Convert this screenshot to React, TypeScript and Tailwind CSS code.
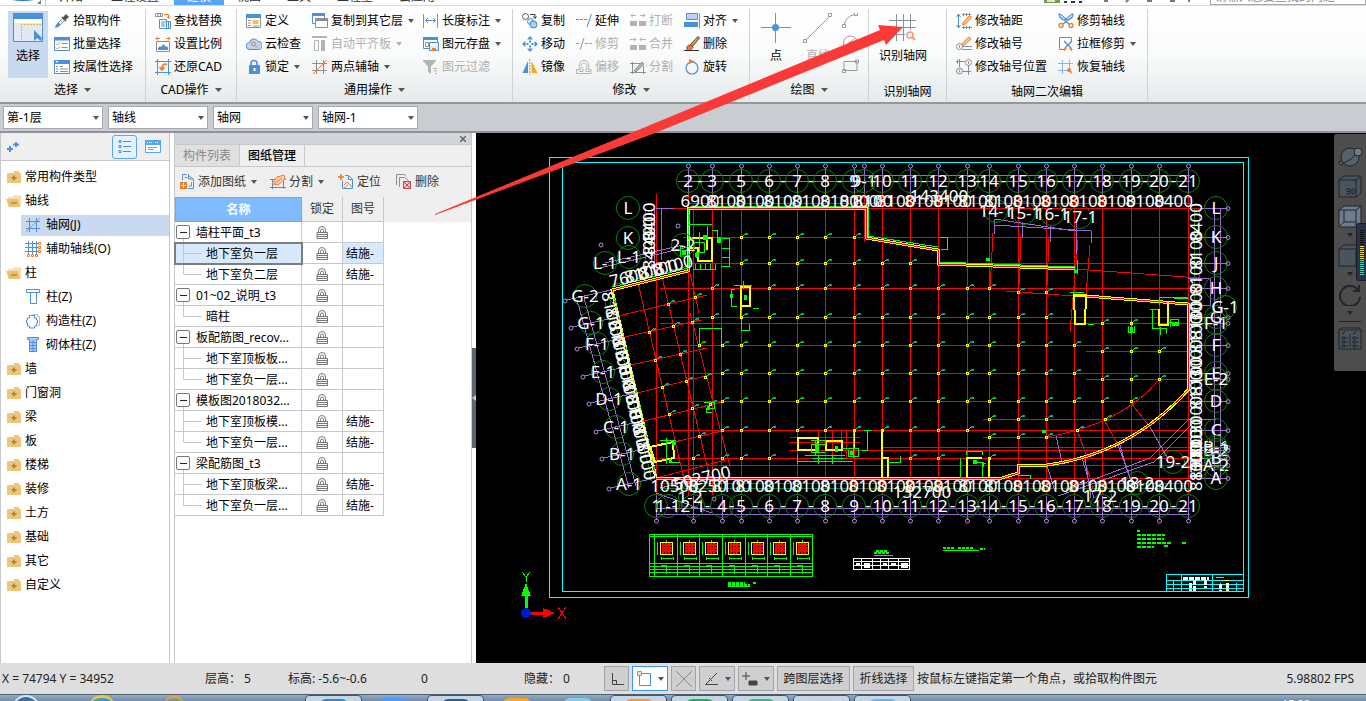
import { useState } from "react";
import type { ReactNode } from "react";

const B = "#4a90dc";
const O = "#f27a2a";
const G = "#87919a";
const D = "#b4b4b4";

// --- Icons, all drawn on a 16x16 box ---
const icons: Record<string, ReactNode> = {
  pipette: (
    <>
      <path d="M1.500 14.500l1-3 6-6 2 2-6 6z" fill="#e8eef4" stroke={G} />
      <path d="M1.500 14.500l1-3 2-2 2 2-2 2z" fill={B} />
      <path d="M8 4l4 4M9.500 5L12 2l2 2-3 2.500z" fill="#555" stroke="#555" strokeWidth="1.500" />
    </>
  ),
  batch: (
    <>
      <path d="M.5 1.500h15v13H.5z" fill="#fff" stroke={B} />
      <path d="M0 1h16v3.500H0z" fill={B} />
      <path d="M2 7.500l1.500 1.500L6 6.500M2 11.500l1.500 1.500L6 10.500" stroke={O} />
      <path d="M7.500 7.500h6M7.500 11.500h6" stroke={G} />
    </>
  ),
  propSelect: (
    <>
      <path d="M.5 1.500h15v13H.5z" fill="#fff" stroke={B} />
      <path d="M0 1h16v4H0z" fill={B} />
      <path d="M2 7.500h2M2 12.500h2M6 7.500h3M6 12.500h8" stroke={G} />
      <path d="M2 10h2M6 10h8" stroke={G} />
      <path d="M1.500 2h3L3 4z" fill="#fff" />
    </>
  ),
  findReplace: (
    <>
      <path d="M.5 .5h7v3h-7zM3 .5v3M5.500 .5v3" stroke={G} />
      <path d="M9 1.500h4.500V5M12 3.500l1.500 2 1.500-2" stroke={O} />
      <path d="M4.500 6.500h7v2h4v7h-11z" fill="#fff" stroke={B} />
      <path d="M6 9h6M6 11h4M6 13h4M11.500 9v6M13.500 9v6" stroke={B} />
    </>
  ),
  scale: (
    <>
      <path d="M1 2.500h4M11 2.500h4M3 .5l-2 2 2 2M13 .5l2 2-2 2" stroke={O} />
      <path d="M1.500 5.500h13v10h-13z" fill="#fff" stroke={G} />
      <path d="M3 14V12l2-2 1 1 2.500-3L11 11l1-1 1 2v2z" fill={B} />
    </>
  ),
  restore: (
    <>
      <path d="M2.500 0v16M13.500 0v16M0 2.500h16M0 13.500h16" stroke={B} />
      <path d="M12 5.500C8 4 7 7 7 10M4.500 8l2.500 3 2.500-3" stroke={O} strokeWidth="1.600" />
    </>
  ),
  define: (
    <>
      <path d="M.5 1.500h14v13H.5z" fill="#fff" stroke={G} />
      <path d="M0 1h15v4H0z" fill={B} />
      <path d="M2 7.500h3M2 10h3M2 12.500h3M7 13h6" stroke={G} />
      <path d="M6.500 7h6v4h-6z" fill="#fbc04a" />
    </>
  ),
  cloud: (
    <>
      <path d="M4 13.500a3.500 3.500 0 01-.5-7 4.500 4.500 0 018.500-1 4 4 0 01.5 8z" fill="#b9d5f3" stroke={B} />
      <circle cx="7.500" cy="8" r="2" stroke={O} />
      <path d="M9 9.500l2 2" stroke={O} />
    </>
  ),
  lock: (
    <>
      <path d="M5 7V4.500a3 3 0 016 0V7" stroke={B} strokeWidth="1.600" />
      <path d="M3.500 6.500h10v8h-10z" fill={B} stroke={B} />
      <path d="M8.500 9v3" stroke="#fff" strokeWidth="2" />
    </>
  ),
  copyLayer: (
    <>
      <path d="M.5 .5h12v10H.5z" fill="#fff" stroke={B} />
      <path d="M0 0h13v3H0z" fill={B} />
      <path d="M3.500 5.500h12v9h-12z" fill="#fff" stroke={G} />
      <path d="M3 5h13v3H3z" fill={G} />
    </>
  ),
  alignSlab: (
    <>
      <path d="M0 1h15" stroke={D} strokeWidth="2" />
      <path d="M2.500 4.500h4v10h-4z" stroke={D} />
      <path d="M9 4h4v11H9z" fill={D} />
    </>
  ),
  twoPoint: (
    <>
      <path d="M4.500 1v14M11.500 1v14M0 4.500h15M0 11.500h15" stroke={G} />
      <path d="M1 15L15 1" stroke={O} />
    </>
  ),
  dim: (
    <>
      <path d="M.5 1v14M14.500 1v14" stroke={G} />
      <path d="M3 7.500h9M5 5L2.500 7.500 5 10M10 5l2.500 2.500L10 10" stroke={B} />
    </>
  ),
  save: (
    <>
      <path d="M.5 1.500h14v11H.5z" fill="#fff" stroke={B} />
      <path d="M0 1h15v3H0z" fill={B} />
      <path d="M2.500 6.500h3v4h-3z" stroke={G} />
      <path d="M6.500 6.500h9v8h-9z" fill="#dceafb" stroke={B} />
      <path d="M8 7h6v3H8z" fill="#fff" />
      <path d="M9 12h4v3H9z" fill={O} />
    </>
  ),
  filter: (
    <>
      <path d="M0 1h13v1L8 7.500V15l-3-2.500v-5L0 2z" fill={D} />
      <path d="M10 9.500h4M11 12h3M12 14.500h2" stroke={D} />
    </>
  ),
  copy: (
    <>
      <circle cx="3.500" cy="3.500" r="3" fill="#fff" stroke="#555" />
      <path d="M8 1.500h5V5M11.500 3.500l1.500 2 1.500-2" stroke="#333" />
      <circle cx="8.500" cy="8.500" r="3" fill="#d4e7fb" stroke={B} />
      <circle cx="11.500" cy="11.500" r="3.500" fill="#a9d2f6" stroke="#3d85b8" />
    </>
  ),
  move: (
    <path d="M8 0l3 3.500H5zM8 16l3-3.500H5zM0 8l3.500-3v6zM16 8l-3.500-3v6zM7 4.500h2v2H7zM7 9.500h2v2H7zM4.500 7h2v2h-2zM9.500 7h2v2h-2z" fill={B} />
  ),
  mirror: (
    <>
      <path d="M6 2v12H.5z" fill={B} />
      <path d="M9.500 2v12h6z" fill="#fba919" />
      <path d="M7.800 0v16" stroke={G} strokeDasharray="2 1" />
    </>
  ),
  extend: (
    <>
      <path d="M0 6.500h11" stroke={B} strokeDasharray="3 1" />
      <path d="M15.500 1L11 14" stroke={B} />
    </>
  ),
  trim: (
    <>
      <path d="M0 7.500h4M9 7.500h7" stroke="#999" strokeDasharray="3 1" />
      <path d="M8 2L4 14" stroke="#999" />
    </>
  ),
  offset: (
    <>
      <path d="M.5 14.500v-4h4c-3-4-1-9 3.500-9s6 5 4 9h3v4z" stroke={D} />
      <path d="M3 12.500h4V10C4 7 5 4 8 4s4 3 2 6v2.500h4" stroke={D} />
    </>
  ),
  break: (
    <>
      <path d="M0 8h7v5H0zM9 8h7v5H9z" fill={D} />
      <path d="M1 2.500h5M10 2.500h5M3 .5L1 2.500l2 2M13 .5l2 2-2 2" stroke={D} />
    </>
  ),
  merge: (
    <>
      <path d="M0 9h7v5H0zM9 9h7v5H9z" fill={D} />
      <path d="M0 3.500h6M10 3.500h6M4 1.500l2 2-2 2M12 1.500l-2 2 2 2" stroke={D} />
    </>
  ),
  split: (
    <>
      <path d="M0 4.500h12M0 13.500h16M2.500 3v12M13.500 7v8" stroke="#8f8f8f" />
      <path d="M4 12l8-9 2 2-8 8z" fill={D} stroke="#8f8f8f" />
    </>
  ),
  align: (
    <>
      <path d="M2.500 .5h11v6h-11z" fill="#b9d3f5" stroke={B} />
      <path d="M0 9h14v5H0z" fill={B} />
      <path d="M15.500 0v15" stroke={G} />
    </>
  ),
  erase: (
    <>
      <path d="M6 9l8-8.500 1.500 1.500-7 8.500z" fill="#cda365" stroke="#53432e" />
      <path d="M3 10.500l4-2 2 3-3 3H3z" fill={O} stroke="#a33a1c" />
      <path d="M0 14.500h15" stroke="#333" />
    </>
  ),
  rotate: (
    <>
      <circle cx="8" cy="9" r="6" stroke={B} strokeWidth="1.200" />
      <path d="M5 0l6 2.500L5 5z" fill={O} />
    </>
  ),
  axisGap: (
    <>
      <path d="M2.500 2v12M.5 4l2-3 2 3M.5 12l2 3 2-3" stroke={B} />
      <path d="M6 1.500h9M6 14.500h10M7.500 0v3M10.500 0v3M13.500 0v3M7.500 13v3M10.500 13v3M13.500 13v3" stroke={G} />
      <path d="M6.500 12l1-3 6-6.500 2 2-6 6.500z" fill="#f8c98d" stroke={O} />
    </>
  ),
  axisNo: (
    <>
      <circle cx="3.500" cy="10.500" r="3" stroke={G} />
      <path d="M3.500 9v3" stroke={O} />
      <path d="M7 10.500h9M6 13.500h10" stroke={G} />
      <path d="M6 9.500l1-3 6-5.500 2 2-6 5.500z" fill="#f8c98d" stroke={O} />
    </>
  ),
  axisPos: (
    <>
      <path d="M3.500 0v8M0 2.500h9M12.500 6v10M7 12.500h8M1.500 .5v4" stroke={G} />
      <circle cx="12.500" cy="3.500" r="3" stroke={G} />
      <circle cx="3.500" cy="12" r="3" stroke={G} />
      <path d="M12.500 2v3M3.500 10.500v3" stroke={O} />
    </>
  ),
  scissors: (
    <>
      <path d="M2 4l9 7M14 4l-9 7M1 1c0 3 2 5 5 6l2-1-6-5zM15 1c0 3-2 5-5 6L8 6l6-5z" stroke={B} strokeWidth="1.200" />
      <circle cx="3" cy="12.500" r="2" stroke={O} strokeWidth="1.300" />
      <circle cx="13" cy="12.500" r="2" stroke={O} strokeWidth="1.300" />
    </>
  ),
  frameTrim: (
    <>
      <path d="M13.500 6V1.500H1.500v12h5" stroke={B} />
      <path d="M6 5l7 7M14 5l-7 7" stroke={B} strokeWidth="1.400" />
      <path d="M6 14.500l2-3M14 14.500l-2-3" stroke={O} strokeWidth="2" />
    </>
  ),
  recover: (
    <>
      <path d="M4.500 1v14M11.500 1v8M0 4.500h15M0 11.500h9" stroke="#8db6e4" />
      <circle cx="11" cy="11" r="2" fill={O} />
      <path d="M12 12l2 2" stroke={O} strokeWidth="1.500" />
    </>
  ),
  folder: (
    <>
      <path d="M2 4h7V2h5v2h2v10H2z" fill="#edc57c" />
      <path d="M9 6.500v5M6.500 9h5" stroke="#b88a35" strokeWidth="2" />
    </>
  ),
  folderOpen: (
    <>
      <path d="M3 4h5V2.500h8V13H3z" fill="#f6dcaa" />
      <path d="M1 6h12l2 8H4z" fill="#edc06f" />
      <path d="M6 10h6" stroke="#b88a35" strokeWidth="1.500" />
    </>
  ),
  grid: (
    <>
      <path d="M4.500 1v14M11.500 1v14M1 4.500h14M1 11.500h14" stroke={B} />
      <path d="M1 15L15 1" stroke={O} strokeWidth="0.800" />
    </>
  ),
  auxAxis: (
    <>
      <path d="M3.500 0v13M7.500 0v13M11.500 0v13M0 2.500h13M0 6.500h13M0 10.500h13" stroke={B} />
      <path d="M13.500 1.500h2v2h-2zM13.500 5.500h2v2h-2zM2.500 13.500h2v2h-2zM6.500 13.500h2v2h-2zM10.500 13.500h2v2h-2zM13.500 9.500h2v2h-2z" stroke={O} />
    </>
  ),
  column: <path d="M1.500 .5h13v3h-3v11h-6v-11h-4zM5 3.500h7" fill="#fff" stroke={B} />,
  tieColumn: (
    <>
      <path d="M7.500 1.500h5v2h2v9h-2" stroke="#9cc4f0" />
      <path d="M4.500 2.500h5v2.500h2v2h1v3h-1v3h-2v2h-5v-2h-2v-3h-1V7h1V5h2z" fill="#fff" stroke={B} />
    </>
  ),
  brickColumn: (
    <>
      <path d="M2.500 .5h11v2h-2v12h-7v-12h-2z" fill="#a9ccf3" stroke={B} />
      <path d="M5 5.500h6M5 8.500h6M5 11.500h6M8 3v11" stroke={B} />
    </>
  ),
  addSheet: (
    <>
      <path d="M3.500 6V.5h4M14.500 8v6.500H9" stroke={B} />
      <path d="M9.500 .5v1l5 4v2M9.500 .5v4.500h5" stroke={B} />
      <path d="M5.500 3.500h3M12.500 8v4h-3" stroke={G} />
      <path d="M1 8h7v7H1z" fill={O} />
      <path d="M4.500 9v5M2 11.500h5" stroke="#fff" />
    </>
  ),
  splitSheet: (
    <>
      <path d="M2.500 5v10M13.500 5v10M0 5.500h16M0 13.500h16" stroke={B} />
      <path d="M2 10l5-7 7-2 1 4-7 6z" fill="#f9d3b4" stroke={O} />
      <path d="M4 10l8-6" stroke={O} />
    </>
  ),
  locate: (
    <>
      <path d="M4.500 6.500v8h10V5l-4-3.500H7M10.500 2v3.500h4" stroke={B} />
      <path d="M3 0v6M0 3h6" stroke={O} strokeWidth="1.600" />
      <path d="M6 11l3-3 5 5M6 14l4-3" stroke={O} />
    </>
  ),
  removeSheet: (
    <>
      <path d="M.5 11V.5h8l2 2M3.500 13V3.500h5l4 3" stroke={G} />
      <path d="M7.500 7.500h7v7h-7z" fill="#f8d0d0" stroke="#c8434b" />
      <path d="M8 8l6 6M14 8l-6 6" stroke="#c8434b" />
    </>
  ),
  padlock: (
    <>
      <path d="M4.500 8V5a3.500 3.500 0 017 0v3M6.500 8V5.500a1.500 1.500 0 013 0V8" stroke="#777" />
      <path d="M3 7.500h10.500v6H3zM3 9.500h10M3 11.500h10" stroke="#777" />
    </>
  ),
};

const Icon = ({ name }: { name: string }) => (
  <svg viewBox="0 0 16 16" fill="none" className="h-4 w-4 shrink-0" aria-hidden="true">
    {icons[name]}
  </svg>
);

const Caret = ({ dim = false }: { dim?: boolean }) => (
  <svg viewBox="0 0 6 4" className="ml-0.5 h-1 w-1.5 shrink-0" aria-hidden="true">
    <path d="M0 0h6L3 4z" fill={dim ? "#b4b4b4" : "#555"} />
  </svg>
);

// --- Ribbon ---
type ToolItem = { icon: string; text: string; menu?: boolean; off?: boolean };

const Tool = ({ icon, text, menu, off }: ToolItem) => (
  <button disabled={off} className="flex h-[23px] items-center gap-[3px] whitespace-nowrap text-black disabled:text-[#b0b0b0]">
    <Icon name={icon} />
    {text}
    {menu && <Caret dim={off} />}
  </button>
);

const ToolColumn = ({ items, className = "" }: { items: ToolItem[]; className?: string }) => (
  <div className={`flex shrink-0 flex-col ${className}`}>
    {items.map((item) => (
      <Tool key={item.text} {...item} />
    ))}
  </div>
);

type GroupProps = { label: string; menu?: boolean; inset?: boolean; className: string; children: ReactNode };

const Group = ({ label, menu = true, inset, className, children }: GroupProps) => (
  <section className={`flex shrink-0 flex-col justify-between border-r border-[#cfd2d5] ${className}`}>
    <div className={`flex ${inset ? "pl-[9px]" : ""}`}>{children}</div>
    <button className={`flex h-[23px] items-center justify-center gap-1 ${menu ? "" : "pt-1"}`}>
      {label}
      {menu && (
        <svg viewBox="0 0 7 4" className="ml-0.5 h-1 w-[7px]" aria-hidden="true">
          <path d="M0 0h7L3.500 4z" fill="#555" />
        </svg>
      )}
    </button>
  </section>
);

const tabs = [
  { text: "开始", width: "w-[50px]" },
  { text: "工程设置", width: "w-[78px]" },
  { text: "建模", width: "w-[50px]" },
  { text: "视图", width: "w-[50px]" },
  { text: "工具", width: "w-[50px]" },
  { text: "工程量", width: "w-[62px]" },
  { text: "云应用", width: "w-[62px]" },
];

const Ribbon = () => (
  <header className="shrink-0">
    <nav className="flex h-[6px] items-end overflow-hidden border-b border-[#d8d8d8] bg-white">
      <svg viewBox="0 0 46 20" className="h-5 w-[46px] shrink-0" aria-hidden="true">
        <path d="M12 0h22v15q-11 2-22 0z" fill="#1976d8" />
        <path d="M41 19v-4l-4 4z" fill="#777" />
        <path d="M45.500 0v20" stroke="#ccc" />
      </svg>
      {tabs.map((tab) => (
        <a
          key={tab.text}
          href="#"
          className={`h-5 shrink-0 text-center leading-6 ${tab.width} ${tab.text === "建模" ? "bg-[#58a4f5] text-white" : "text-[#333]"}`}
        >
          {tab.text}
        </a>
      ))}
      <div className="ml-auto flex h-5 items-end gap-5">
        <svg viewBox="0 0 146 20" className="h-5 w-[146px]" aria-hidden="true">
          <path d="M0 5h16v13H0z" fill="#7c9b52" />
          <path d="M3 15h8v2H3z" fill="#dfe8c9" />
          <path d="M20 17h3M27 17h4M35 17h3" stroke="#333" strokeWidth="2" />
          <path d="M60 16h4M82 17l3-3M103 16h5M126 16h5M144 16h2" stroke="#777" strokeWidth="2" />
        </svg>
        <input aria-label="搜索" defaultValue="请输入您要查找的问题" className="h-[19px] w-[156px] border border-[#aaa] bg-white px-1 text-[#888]" />
      </div>
    </nav>

    <div className="flex h-[98px] border-b-2 border-[#94989d] bg-linear-to-b from-white via-[#fafbfb] to-[#e6eaeb] pt-[3px] pb-px">
      <Group label="选择" className="w-[146px]">
        <div className="flex w-[54px] justify-center pt-0.5 pl-0.5">
          <button className="flex h-[67px] w-10 flex-col items-center gap-[5px] bg-[#c9d9f0] pt-0.5">
            <svg viewBox="0 0 30 30" fill="none" className="h-[30px] w-[30px]" aria-hidden="true">
              <path d="M.5 .5h29v28H.5z" fill="#e3e9f2" stroke={B} />
              <path d="M0 0h30v6H0z" fill={B} />
              <path d="M1 6h28v4H1z" fill="#fff" />
              <path d="M8.500 27V11.500H28" stroke="#f7b52c" strokeDasharray="2 1" />
              <path d="M21 17v11l3-3 4 3 1-3z" fill={B} />
            </svg>
            选择
          </button>
        </div>
        <ToolColumn
          items={[
            { icon: "pipette", text: "拾取构件" },
            { icon: "batch", text: "批量选择" },
            { icon: "propSelect", text: "按属性选择" },
          ]}
        />
      </Group>

      <Group label="CAD操作" inset className="w-[91px]">
        <ToolColumn
          items={[
            { icon: "findReplace", text: "查找替换" },
            { icon: "scale", text: "设置比例" },
            { icon: "restore", text: "还原CAD" },
          ]}
        />
      </Group>

      <Group label="通用操作" inset className="w-[276px]">
        <ToolColumn
          className="w-[66px]"
          items={[
            { icon: "define", text: "定义" },
            { icon: "cloud", text: "云检查" },
            { icon: "lock", text: "锁定", menu: true },
          ]}
        />
        <ToolColumn
          className="w-[111px]"
          items={[
            { icon: "copyLayer", text: "复制到其它层", menu: true },
            { icon: "alignSlab", text: "自动平齐板", menu: true, off: true },
            { icon: "twoPoint", text: "两点辅轴", menu: true },
          ]}
        />
        <ToolColumn
          items={[
            { icon: "dim", text: "长度标注", menu: true },
            { icon: "save", text: "图元存盘", menu: true },
            { icon: "filter", text: "图元过滤", off: true },
          ]}
        />
      </Group>

      <Group label="修改" inset className="w-[237px]">
        <ToolColumn
          className="w-[54px]"
          items={[
            { icon: "copy", text: "复制" },
            { icon: "move", text: "移动" },
            { icon: "mirror", text: "镜像" },
          ]}
        />
        <ToolColumn
          className="w-[54px]"
          items={[
            { icon: "extend", text: "延伸" },
            { icon: "trim", text: "修剪", off: true },
            { icon: "offset", text: "偏移", off: true },
          ]}
        />
        <ToolColumn
          className="w-[54px]"
          items={[
            { icon: "break", text: "打断", off: true },
            { icon: "merge", text: "合并", off: true },
            { icon: "split", text: "分割", off: true },
          ]}
        />
        <ToolColumn
          items={[
            { icon: "align", text: "对齐", menu: true },
            { icon: "erase", text: "删除" },
            { icon: "rotate", text: "旋转" },
          ]}
        />
      </Group>

      <Group label="绘图" className="w-[119px]">
        <button className="flex w-[52px] flex-col items-center gap-[5px] pt-1">
          <svg viewBox="0 0 30 30" fill="none" className="h-[30px] w-[30px]" aria-hidden="true">
            <path d="M0 14.500h30M14.500 0v30" stroke={G} />
            <circle cx="14.500" cy="14.500" r="3.500" fill={B} />
          </svg>
          点
        </button>
        <button disabled className="flex w-8 flex-col items-center gap-[5px] pt-1 text-[#b0b0b0]">
          <svg viewBox="0 0 30 30" fill="none" className="h-[30px] w-[30px]" aria-hidden="true">
            <path d="M3 27L27 3" stroke="#999" />
            <path d="M.5 26.500h3v3h-3zM25.500 .5h3v3h-3z" fill="#fff" stroke="#999" />
          </svg>
          直线
        </button>
        <svg viewBox="0 0 20 66" fill="none" stroke="#999" className="mt-1 ml-2 h-[66px] w-5" aria-hidden="true">
          <path d="M2 12Q4 3 13 1.500M.5 11.500h3v3h-3zM12.500 -.5h3v3h-3z" />
          <circle cx="8.500" cy="30" r="7" />
          <path d="M8 30l4-4M7 29h2v2H7z" />
          <path d="M2 48.500h13v9H2zM.5 56.500h3v3h-3zM13.500 47h3v3h-3z" />
        </svg>
      </Group>

      <Group label="识别轴网" menu={false} className="w-[78px]">
        <button className="flex w-[68px] flex-col items-center gap-[5px] pt-1">
          <svg viewBox="0 0 28 30" fill="none" className="h-[30px] w-7" aria-hidden="true">
            <path d="M7.500 1v27M14.500 1v27M21.500 1v16M0 7.500h27M0 14.500h27M0 21.500h16" stroke={G} />
            <circle cx="21" cy="22" r="3" stroke="#f79a6c" strokeWidth="1.500" />
            <path d="M23 24l3 3" stroke="#f79a6c" strokeWidth="2" />
          </svg>
          识别轴网
        </button>
      </Group>

      <Group label="轴网二次编辑" menu={false} inset className="w-[201px]">
        <ToolColumn
          className="w-[102px]"
          items={[
            { icon: "axisGap", text: "修改轴距" },
            { icon: "axisNo", text: "修改轴号" },
            { icon: "axisPos", text: "修改轴号位置" },
          ]}
        />
        <ToolColumn
          items={[
            { icon: "scissors", text: "修剪轴线" },
            { icon: "frameTrim", text: "拉框修剪", menu: true },
            { icon: "recover", text: "恢复轴线" },
          ]}
        />
      </Group>
    </div>
  </header>
);

const OptionBar = () => (
  <div className="flex h-[29px] shrink-0 items-center gap-[5px] border-b-2 border-[#8f9399] bg-[#c9ccd1] pl-[3px]">
    {[
      { label: "楼层", value: "第-1层" },
      { label: "构件类别", value: "轴线" },
      { label: "构件类型", value: "轴网" },
      { label: "构件", value: "轴网-1" },
    ].map((item) => (
      <div key={item.label} className="relative">
        <select aria-label={item.label} className="h-[23px] w-[100px] appearance-none border border-[#a6a9ad] bg-white pt-px pl-[3px] text-black">
          <option>{item.value}</option>
        </select>
        <span className="pointer-events-none absolute top-0 right-1 flex h-full items-center">
          <Caret />
        </span>
      </div>
    ))}
  </div>
);

// --- Component tree (left) ---
const treeItems = [
  { text: "常用构件类型", icon: "folder" },
  { text: "轴线", icon: "folderOpen" },
  { text: "轴网(J)", icon: "grid", child: true },
  { text: "辅助轴线(O)", icon: "auxAxis", child: true },
  { text: "柱", icon: "folderOpen" },
  { text: "柱(Z)", icon: "column", child: true },
  { text: "构造柱(Z)", icon: "tieColumn", child: true },
  { text: "砌体柱(Z)", icon: "brickColumn", child: true },
  { text: "墙", icon: "folder" },
  { text: "门窗洞", icon: "folder" },
  { text: "梁", icon: "folder" },
  { text: "板", icon: "folder" },
  { text: "楼梯", icon: "folder" },
  { text: "装修", icon: "folder" },
  { text: "土方", icon: "folder" },
  { text: "基础", icon: "folder" },
  { text: "其它", icon: "folder" },
  { text: "自定义", icon: "folder" },
];

const ComponentTree = () => {
  const [selected, setSelected] = useState("轴网(J)");
  return (
    <aside className="w-[170px] shrink-0 border-x border-[#c5c8cd] bg-white">
      <div className="flex h-7 items-center border-b border-[#c5c8cd] bg-[#efefef] pr-2 pl-1.5">
        <button aria-label="添加">
          <svg viewBox="0 0 12 12" className="h-3 w-3" fill="none" stroke={B} strokeWidth="2">
            <path d="M3 5v6M0 8h6M9 1v5M6 3.500h6" />
          </svg>
        </button>
        <button aria-label="列表" className="ml-auto flex h-6 w-[25px] items-center justify-center rounded-[3px] border border-[#58a4f5] bg-[#e6f2fe]">
          <svg viewBox="0 0 14 14" className="h-3.5 w-3.5" fill="none" stroke={B}>
            <path d="M1 .5h2v2H1zM1 5.500h2v2H1zM1 10.500h2v2H1zM5 1.500h8M5 6.500h8M5 11.500h8" />
          </svg>
        </button>
        <button aria-label="窗口" className="ml-2">
          <svg viewBox="0 0 16 14" className="h-3.5 w-4" fill="none">
            <path d="M.5 .5h15v12H.5z" fill="#fff" stroke="#58a4f5" />
            <path d="M0 0h16v5H0z" fill="#58a4f5" />
            <path d="M2 2.500h5M10 2.500h4" stroke="#fff" strokeDasharray="1 1" />
            <path d="M3 7.500h9M3 9.500h6" stroke="#58a4f5" />
          </svg>
        </button>
      </div>
      <ul className="pt-1">
        {treeItems.map((item) => (
          <li key={item.text} className={`flex h-6 items-center ${item.child ? "pl-5" : "pl-1"}`}>
            <button
              onClick={() => setSelected(item.text)}
              className={`flex h-[21px] w-full items-center text-left ${item.child ? "gap-[5px] pl-1" : "gap-1"} ${selected === item.text ? "bg-[#c9d9f0]" : ""}`}
            >
              <Icon name={item.icon} />
              {item.text}
            </button>
          </li>
        ))}
      </ul>
    </aside>
  );
};

// --- Drawing manager ---
type Row = { name: string; no?: string; parent?: boolean; last?: boolean; active?: boolean };

const rows: Row[] = [
  { name: "墙柱平面_t3", parent: true },
  { name: "地下室负一层", no: "结施-", active: true },
  { name: "地下室负二层", no: "结施-", last: true },
  { name: "01~02_说明_t3", parent: true },
  { name: "暗柱", last: true },
  { name: "板配筋图_recov...", parent: true },
  { name: "地下室顶板板..." },
  { name: "地下室负一层...", last: true },
  { name: "模板图2018032...", parent: true },
  { name: "地下室顶板模...", no: "结施-" },
  { name: "地下室负一层...", no: "结施-", last: true },
  { name: "梁配筋图_t3", parent: true },
  { name: "地下室顶板梁...", no: "结施-" },
  { name: "地下室负一层...", no: "结施-", last: true },
];

const cell = "h-[21px] border-r border-b border-[#c5c8cd] p-0 font-normal";

const DrawingManager = () => (
  <section className="flex w-[298px] shrink-0 flex-col border-x border-[#c5c8cd] bg-white">
    <div className="flex h-3 items-center justify-end border-b border-[#c5c8cd] bg-[#d2d5d9] pr-[5px]">
      <button aria-label="关闭">
        <svg viewBox="0 0 6 6" className="h-1.5 w-1.5" stroke="#666" strokeWidth="1.500">
          <path d="M0 0l6 6M6 0L0 6" />
        </svg>
      </button>
    </div>
    <div className="flex h-[22px] border-b border-[#c5c8cd] bg-[#efefef]">
      <button className="w-[65px] border-r border-[#c5c8cd] bg-[#e0e0e0] text-[#888]">构件列表</button>
      <button className="w-[65px] border-r border-[#c5c8cd] font-medium text-black">图纸管理</button>
    </div>
    <div className="flex h-[30px] items-center bg-[#efefef] pl-1 text-[#333]">
      <button className="flex w-[91px] items-center gap-[3px]">
        <Icon name="addSheet" />添加图纸<Caret />
      </button>
      <button className="flex w-[68px] items-center gap-[3px]">
        <Icon name="splitSheet" />分割<Caret />
      </button>
      <button className="flex w-[58px] items-center gap-[3px]">
        <Icon name="locate" />定位
      </button>
      <button className="flex items-center gap-[3px]">
        <Icon name="removeSheet" />删除
      </button>
    </div>
    <div className="relative">
      <div className="absolute inset-x-0 top-0 h-[25px] bg-[#efefef]" />
      <table className="relative w-[209px] table-fixed border-separate border-spacing-0">
        <thead>
          <tr className="h-[25px] text-[#333]">
            <th className="w-[127px] border border-[#6aa9ee] bg-[#80bbff] p-0 font-bold text-white">名称</th>
            <th className="w-[41px] border-r border-b border-[#c5c8cd] bg-[#efefef] p-0 font-normal">锁定</th>
            <th className="w-[41px] border-r border-b border-[#c5c8cd] bg-[#efefef] p-0 font-normal">图号</th>
          </tr>
        </thead>
        <tbody>
          {rows.map((row, i) => (
            <tr key={i} className="bg-white">
              <td className={`${cell} ${row.active ? "bg-[#d6e9fd] outline-2 -outline-offset-1 outline-[#7d7d7d]" : ""}`}>
                <div className="flex h-5 items-center overflow-hidden whitespace-nowrap">
                  {row.parent ? (
                    <button aria-label="折叠" className="mr-[6px] ml-px h-5 w-3.5">
                      <svg viewBox="0 0 14 20" fill="none" className="h-5 w-3.5">
                        <rect x="0.500" y="3.500" width="13" height="13" rx="1.500" fill="#fff" stroke="#777" />
                        <path d="M4 10.500h7" stroke="#222" />
                        <path d="M7.500 17v3" stroke="#c5c8cd" />
                      </svg>
                    </button>
                  ) : (
                    <svg viewBox="0 0 31 20" fill="none" className="h-5 w-[31px] shrink-0" aria-hidden="true">
                      <path d={row.last ? "M8.500 0v10.500h18" : "M8.500 0v20M8.500 10.500h18"} stroke="#c5c8cd" />
                    </svg>
                  )}
                  <span className="pt-px">{row.name}</span>
                </div>
              </td>
              <td className={cell}>
                <div className="flex justify-center pt-px">
                  <Icon name="padlock" />
                </div>
              </td>
              <td className={`${cell} pt-px pl-[3px] ${row.active ? "bg-[#d6e9fd]" : ""}`}>{row.no}</td>
            </tr>
          ))}
        </tbody>
      </table>
    </div>
  </section>
);

// --- CAD drawing ---
const topAxes: [number, string][] = [
  [688, "2"], [712, "3"], [741, "5"], [769, "6"], [797, "7"], [825, "8"], [854, "9"], [864, "9-1"], [882, "10"],
  [910, "11"], [938, "12"], [967, "13"], [989, "14"], [1018, "15"], [1046, "16"], [1074, "17"], [1102, "18"],
  [1131, "19"], [1159, "20"], [1188, "21"],
];
const bottomAxes: [number, string][] = [
  [656, "1"], [693, "2-1"], [722, "4"],
  ...topAxes.filter(([x, t]) => x >= 741 && t !== "9-1"),
];
const rightAxes: [number, string][] = [
  [208, "L"], [237, "K"], [263, "J"], [288, "H"], [317, "G"], [323, "F-1"], [345, "F"], [373, "E"], [379, "E-2"],
  [401, "D"], [430, "C"], [447, "B-1"], [450, "B-2"], [458, "B"], [465, "A-2"], [478, "A"],
];
const leftAxes: [number, number, string][] = [
  [628, 208, "L"], [628, 238, "K"], [605, 263, "L-1"], [629, 257, "L-1"], [683, 245, "2-2"], [585, 296, "G-2"],
  [591, 323, "G-1"], [597, 344, "F-1"], [603, 372, "E-1"], [609, 399, "D-1"], [616, 427, "C-1"], [622, 454, "B-1"],
  [629, 484, "A-1"],
];
const extraAxes: [number, number, string][] = [
  [996, 211, "14-1"], [1024, 213, "15-1"], [1052, 214, "16-1"], [1080, 217, "17-1"], [1225, 307, "G-1"],
  [1173, 462, "19-2"], [1137, 483, "18-2"], [1100, 496, "17-2"], [668, 506, "1-1"], [690, 497, "1-2"],
];

// grid rows: y followed by the x of every column standing on it
const columnRows: [number, number[]][] = [
  [237, [741, 769, 797, 825, 854]],
  [263, [741, 769, 797, 825, 854, 882, 910]],
  [288, [712, 769, 797, 825, 854, 882, 910, 938, 967, 989]],
  [292, [1018, 1046]],
  [317, [712, 741, 769, 797, 825, 854, 882, 910, 938, 967, 989, 1018, 1046]],
  [323, [1102, 1131]],
  [345, [699, 722, 741, 769, 797, 825, 854, 882, 910, 938, 967, 989, 1018, 1046, 1074]],
  [351, [1102, 1131, 1159]],
  [373, [722, 741, 769, 797, 825, 854, 882, 910, 938, 967, 989, 1018, 1046, 1074]],
  [379, [1102, 1131, 1159]],
  [401, [722, 741, 769, 797, 825, 854, 882, 910, 938, 967, 989, 1018, 1046, 1074, 1102, 1131]],
  [419, [989, 1018, 1046, 1105]],
  [430, [722, 741, 769, 797, 825, 854, 882, 910, 938, 967, 1077]],
  [437, [989, 1018, 1046]],
  [458, [693, 722, 741, 769, 910, 938, 989]],
];
const skewColumns: [number, number][] = [
  [668, 304], [695, 297], [649, 332], [673, 326], [692, 322], [655, 360], [680, 354], [662, 387], [686, 381],
  [705, 377], [669, 414], [692, 408], [710, 404], [699, 436],
];
const allColumns = [...columnRows.flatMap(([y, xs]) => xs.map((x): [number, number] => [x, y])), ...skewColumns];
const detailCells = [666, 689, 711, 734, 757, 779, 802];

const AxisMark = ({ x, y, text }: { x: number; y: number; text: string }) => (
  <>
    <circle cx={x} cy={y} r="11.500" stroke="#0a860a" />
    <text x={x} y={y + 6} textAnchor="middle" fill="#fff">
      {text}
    </text>
  </>
);

const wall =
  "M656 478L612 290L688 271V208H866V238L938 250V264L1075 269M1073 295L1188 304V390Q1130 454 1047 465H1018V473L1002 478H656";

const CadDrawing = () => (
  <svg
    viewBox="476 133 890 530"
    preserveAspectRatio="xMinYMin meet"
    fill="none"
    shapeRendering="crispEdges"
    className="h-full w-full font-['Noto_Sans',sans-serif] text-[17px] font-normal"
    role="img"
    aria-label="地下室负一层"
  >
    <g stroke="#00ffff">
      <path d="M549.500 157.500h699v440h-699zM562.500 162.500h681v429h-681z" />
    </g>

    {/* axis lines */}
    <g stroke="#f00">
      {topAxes.map(([x, t]) => (
        <path key={t} d={`M${x + 0.5} 193V${t === "9-1" ? 242 : 495}`} />
      ))}
      <path d="M656.500 194V520M693.500 208V495M721.500 208V495" />
      <path d="M656 208.500H1200M683 237.500H1200M688 263.500H1200M660 288.500H1200M660 317.500H1200M660 323.500H1200M660 345.500H1200M660 373.500H1200" />
      <path d="M660 401.500H1200M660 430.500H1200M983 419.500H1200M983 437.500H1200M882 447.500H1200M790 450.500H1200M660 458.500H1200M655 465.500H1200M660 478.500H1200" />
      <path d="M1086 351.500H1188M1086 379.500H1188" />
      <path d="M638 283l47 200M662 277l49 205M690 273l9 40M690 313l40 154M618 316l89-21M625 337l76-17M631 365l76-17M637 393l76-19M640 422l82-20M648 448l74-17M656 478l70-18" />
      <path d="M993 233l-3 57M1021 236l-3 72M1049 238l-3 72M1078 240l-8 92M1090 245l-4 50M1075 269l125 9M1006 291l68 5" />
      <path d="M1159 380Q1120 425 1047 437M1131 403l19 24M1103 418l15 27M1077 430l10 27M1083 455l10 33" />
      <path d="M818 430v30M832 430v30M841 430v30M846 430v30M790 437h70M790 442h70" />
    </g>

    {/* dimension chains */}
    <g stroke="#0a7a0a">
      <path d="M685 197.500H1190M685 203.500H1190M660 483.500H1190M660 488.500H1190M1194.500 208V480M1199.500 208V480M645.500 208V268M651.500 208V268" />
      <path d="M604 297l43 185M609 296l43 185M612 285l76-19" />
    </g>
    <g stroke="#9a6ad0">
      <path d="M686 175.500H1190M678 181.500H1190M656 508.500H1190M656 514.500H1190M1214.500 208V480M1220.500 208V480" />
      <path d="M577 300l52 188M584 298l52 188M605 263l78-18M600 268l88-21M656 208h18M661.500 208v52M654.500 208v62" />
      <path d="M994 219l81 12M994 225l97 6v12M994.500 219v15M1022.500 222v16M1050.500 226v16M1076.500 222v32" />
      <path d="M1056 436l6 26h5M1047 466l8 25M1082 458l12 40M1118 445l14 38M1150 427l18 32M1066 490L1150 458L1188 420M1058 496L1154 462L1196 420M1085 458l6 40M1120 445l8 28" />
      <path d="M1188 278h22v27h-12M1188 419h28M656 493l56 20M660 488l54-12" />
      {topAxes.map(([x]) => (
        <path key={x} d={`M${x + 0.5} 168v26`} />
      ))}
      {bottomAxes.map(([x]) => (
        <path key={x} d={`M${x + 0.5} 496v24`} />
      ))}
      {rightAxes.map(([y]) => (
        <path key={y} d={`M1200 ${y + 0.5}h27`} />
      ))}
      {leftAxes.slice(5).map(([x, y]) => (
        <path key={y} d={`M${x - 18} ${y + 4}l44-10`} />
      ))}
    </g>
    <g stroke="#b58ae6" shapeRendering="auto">
      {topAxes.map(([x]) => (
        <circle key={x} cx={x + 0.5} cy="166" r="2" />
      ))}
      {bottomAxes.map(([x]) => (
        <circle key={x} cx={x + 0.5} cy="521" r="2" />
      ))}
      {rightAxes.map(([y]) => (
        <circle key={y} cx="1228" cy={y + 0.5} r="2" />
      ))}
      {leftAxes.slice(5).map(([x, y]) => (
        <circle key={y} cx={x - 20} cy={y + 5} r="2" />
      ))}
      <circle cx="601" cy="245" r="2" />
      <circle cx="678" cy="226" r="2" />
      <circle cx="714" cy="499" r="2" />
    </g>

    {/* outer wall */}
    <path d={wall} stroke="#ff0" strokeWidth="3" />
    <path d={wall} stroke="#f00" />
    <path d="M690 206.500H868V236L938 247M939 262L1075 267M688 208V268L612 287M613 292L655 470" stroke="#0f0" />

    {/* shear walls */}
    <g stroke="#ff0" strokeWidth="2">
      <path d="M689 238h23v23h-14v-13h-9M707 238v12M741 287h9v19h-9zM741 306v12M1074 295h12l-1 29h-10zM1168 302v23h-9v-16" />
      <path d="M798 438h20v12h-20zM826 450v-9h16v9zM854 430v18M882 430v48M888 478v-20h-6M967 478v-20h15M989 458v20M650 447l23-5 1 16-19 4z" />
    </g>
    <g stroke="#0f0">
      <path d="M689 224.500h23M689.500 214v8M707 226v12M712 230h5v12h4M722 238h7v28h-8M722 248h7M722 257h7M693 269h22M695 264v6M700 264v6M705 264v6M710 264v6M715 264v6M692 242h12v10h-8v6M699 232v20M684 250h8M680 245v12" />
      <path d="M735 289h-4v17h6M734 285h18M743 281v8M753 308h6M741 310v20h8v-6M699 345v-17h22v17" />
      <path d="M1077 260v14M1070 292h14M1088 324h6M1128 326v6h6v-6M1131 320v14M1159 305v-8l29 2M1152 310v18h14v6M1150 309h8M1168 322h10v-3h-8v8M1160 327v8" />
      <path d="M940 237h7v12h-6M797 461h56M797 454v10M818 456v8M832 456v8M853 458v-28M867 430v20h-5M864 430h8M815 440v16M811 440h14v4h-14v8h14M842 448h16v8h-10v-6M805 455h40M812 458h34" />
      <path d="M888 462h12v-6M966 455v-4h16v4M960 458v19h6M986 463h-4v14M973 462h10v5M1018 475h12v4M666 438v26M660 440h16M670 462h10M704 402h10v6h-8v4h6M1159 297h29" />
    </g>
    <g fill="#0f0">
      <path d="M703 235h5v5h-5zM717 237h4v5h-4zM695 253h4v4h-4zM682 250h4v5h-4zM744 295h3v5h-3zM730 294h3v4h-3zM1172 322h7v4h-7zM1130 327h3v6h-3zM816 443h3v9h-3zM835 446h3v6h-3zM850 451h4v4h-4zM973 460h4v4h-4zM707 406h3v4h-3zM672 442h4v3h-4zM669 459h3v4h-3zM1042 430h4v3h-4zM986 258h4v3h-4zM1074 270h4v3h-4z" />
    </g>

    {/* columns */}
    {allColumns.map(([x, y]) => (
      <g key={`${x}-${y}`}>
        <path d={`M${x + 2} ${y - 1}l3-3`} stroke="#0f0" />
        <path d={`M${x + 4} ${y - 3}h3`} stroke="#0aa38c" strokeWidth="2" />
        <rect x={x - 0.5} y={y - 0.5} width="2" height="2" stroke="#ff0" />
      </g>
    ))}

    {/* axis bubbles and dimension figures */}
    <g shapeRendering="auto">
      {topAxes.map(([x, t]) => (
        <AxisMark key={t} x={x} y={181} text={t} />
      ))}
      {bottomAxes.map(([x, t]) => (
        <AxisMark key={t} x={x} y={506} text={t} />
      ))}
      {rightAxes.map(([y, t]) => (
        <AxisMark key={t} x={1216} y={y} text={t} />
      ))}
      {[...leftAxes, ...extraAxes].map(([x, y, t]) => (
        <AxisMark key={`${x}-${y}`} x={x} y={y} text={t} />
      ))}
      <g fill="#fff" textAnchor="middle">
        {topAxes.slice(0, -1).map(([x, t], i) => (
          <text key={t} x={(x + topAxes[i + 1][0]) / 2} y="207">
            {i === 0 ? "6900" : i === 18 ? "8400" : "8100"}
          </text>
        ))}
        {bottomAxes.slice(0, -1).map(([x, t], i) => (
          <text key={t} x={(x + bottomAxes[i + 1][0]) / 2} y="492">
            {i === 0 ? "10500" : i === 1 ? "8250" : x === 1159 ? "8400" : "8100"}
          </text>
        ))}
        {topAxes.slice(0, -1).map(([x, t], i) => (
          <text key={t} x={(x + topAxes[i + 1][0]) / 2} y="186">
            -
          </text>
        ))}
        {bottomAxes.slice(0, -1).map(([x, t], i) => (
          <text key={t} x={(x + bottomAxes[i + 1][0]) / 2} y="511">
            -
          </text>
        ))}
        <text x="939" y="202">143400</text>
        <text x="922" y="498">132700</text>
        <text x="702" y="484" transform="rotate(-13 702 478)">502700</text>
        {rightAxes.slice(0, -1).map(([y, t], i) => (
          <text key={t} transform={`translate(1202 ${(y + rightAxes[i + 1][0]) / 2}) rotate(-90)`}>
            {i === 0 ? "8400" : i % 3 === 0 ? "3000" : "8100"}
          </text>
        ))}
        {[222, 236, 250].map((y) => (
          <text key={y} transform={`translate(655 ${y}) rotate(-90)`}>
            8400
          </text>
        ))}
        {[630, 645, 660, 675].map((x, i) => (
          <text key={x} transform={`translate(${x} ${283 - i * 4}) rotate(-13)`}>
            {i === 0 ? "7600" : "8100"}
          </text>
        ))}
        {[312, 328, 342, 358, 372, 386, 402, 416, 430, 446, 462].map((y) => (
          <text key={y} transform={`translate(${602 + (y - 297) * 0.234} ${y}) rotate(77)`}>
            8100
          </text>
        ))}
      </g>
    </g>

    {/* column schedule */}
    <g stroke="#0f0">
      <path d="M649.500 534.500h163v42h-163zM649 536.500h163M649 563.500h163M649 566.500h163M649 569.500h163M649 572.500h163M654.500 534v42" />
      {detailCells.slice(1).map((x) => (
        <path key={x} d={`M${x - 11.5} 535v41`} />
      ))}
    </g>
    {detailCells.map((x) => (
      <g key={x}>
        <rect x={x - 5.5} y="542.500" width="12" height="12" stroke="#ff0" />
        <path d={`M${x - 4} 545h10M${x - 4} 548h10M${x - 4} 551h10M${x - 3} 543v11M${x} 543v11M${x + 3} 543v11`} stroke="#f00" strokeWidth="2" />
        <path d={`M${x - 8.500} 542v13M${x - 5} 558.500h12M${x - 5} 557v3M${x + 7} 557v3M${x - 5} 565h5v9M${x} 540v2`} stroke="#0f0" />
      </g>
    ))}
    <path d="M728 583h17M728 585h22M753 583h3M874 553h16M876 551h12M943 548h11M958 548h16M980 549h5" stroke="#0f0" strokeWidth="2" strokeDasharray="3 1" />
    <path d="M874 555.500h19M943 550.500h36M728 586.500h22" stroke="#0f0" />
    <path d="M1137 531h3M1137 535h28M1137 539h27M1137 543h34M1137 547h17M1164 546h4M1182 543h4" stroke="#0f0" strokeWidth="2" strokeDasharray="4 1" />
    <path d="M853.500 558.500h56v11h-56zM853 561.500h56M853 565.500h56M861.500 558v11M872.500 558v11M880.500 558v11M888.500 558v11M898.500 558v11" stroke="#fff" />
    <path d="M856 564h4M864 564h6M883 564h4M891 564h5M901 564h7M864 567h6M901 567h7" stroke="#fff" strokeWidth="2" />
    <path d="M1166.500 574.500h77v17M1166.500 574v17M1166 580.500h77M1166 584.500h77M1166 588.500h77M1173.500 580v11M1181.500 574v17M1212.500 574v17M1220.500 583v8M1236.500 583v8M1216 577.500h8" stroke="#00ffff" />
    <path d="M1183 578h26M1190 583v8M1194 580v11M1205 580v8M1220 584v7M1227 583v8" stroke="#fff" strokeWidth="3" strokeDasharray="5 1" />
    <path d="M1223 580.500h6M1226 588h2" stroke="#ff0" />

    {/* UCS */}
    <path d="M526 610v-18" stroke="#0f0" strokeWidth="3" />
    <path d="M521 596l5-13 5 13z" fill="#0f0" />
    <path d="M529 613h16" stroke="#f00" strokeWidth="3" />
    <path d="M543 608l12 5-12 5z" fill="#f00" />
    <circle cx="526" cy="613" r="5" fill="#0018c8" />
    <path d="M522 572l4 5 4-5M526 577v5" stroke="#0f0" />
    <path d="M558 607l8 12M566 607l-8 12" stroke="#f00" />
  </svg>
);

const ViewCaret = () => (
  <svg viewBox="0 0 6 4" className="h-1 w-1.5" aria-hidden="true">
    <path d="M0 0h6L3 4z" fill="#20252b" />
  </svg>
);

const viewTools = [
  { label: "动态观察", draw: <><circle cx="12" cy="13" r="9" fill="#56616c" /><path d="M4 20Q14 16 20 8" /><circle cx="20" cy="8" r="4" fill="#6f7c88" /><circle cx="3" cy="19" r="2" fill="#56616c" /></> },
  { label: "三维", draw: <><path d="M1 6h17v17H1zM1 6l5-4h17v17l-5 4M18 6l5-4" fill="#4a545f" /><path d="M8 15h4v5H8M9 17.500h3M14 15h2l1 1v3l-1 1h-2z" /></> },
  { label: "线框", draw: <><path d="M1 6h17v17H1zM1 6l5-4h17v17l-5 4M18 6l5-4" fill="#6c7c8c" /><path d="M6 6v12h12M6 18l-5 5" /></>, menu: true },
  { label: "着色", draw: <path d="M1 6h17v17H1zM1 6l5-4h17v17l-5 4M18 6l5-4" fill="#4a545f" />, menu: true },
  { label: "旋转", draw: <path d="M20 8A10 10 0 1 0 22 15M21 3v6h-6" strokeWidth="2" />, menu: true },
];

const ViewToolbar = () => (
  <div className="absolute top-px right-0 flex h-[237px] w-8 flex-col items-center rounded-l-xs bg-[#4d4d4d] pt-[10px]">
    {viewTools.map((tool) => (
      <button key={tool.label} aria-label={tool.label} className={`flex shrink-0 flex-col items-center gap-[5px] ${tool.menu ? "h-[39px]" : "h-[30px]"}`}>
        <svg viewBox="0 0 24 24" fill="none" stroke="#20252b" className="h-6 w-6">
          {tool.draw}
        </svg>
        {tool.menu && <ViewCaret />}
      </button>
    ))}
    <div className="w-[22px] border-t border-[#20252b]" />
    <button aria-label="显示设置" className="mt-1">
      <svg viewBox="0 0 24 24" fill="none" stroke="#20252b" className="h-6 w-6">
        <path d="M1 4l2-2h18l2 2v19H1zM1 4h22" fill="#4a545f" />
        <path d="M4 7l1 1 2-3M15 7l1 1 2-3M12 8v13M4 11h3v2H4zM4 15h3v2H4zM4 19h3v2H4zM15 11h3v2h-3zM15 15h3v2h-3zM15 19h3v2h-3zM8 12h2M8 16h2M8 20h2M19 12h2M19 16h2M19 20h2" />
      </svg>
    </button>
    <svg viewBox="0 0 10 58" className="absolute top-[89px] right-0 h-[58px] w-2.5" aria-hidden="true">
      <rect x="0.500" y="0.500" width="12" height="57" rx="2" fill="#2c3049" stroke="#191b2a" />
      <path d="M6 7v15" stroke="#111" strokeWidth="4" strokeDasharray="1 1" />
      <path d="M6 23v14" stroke="#e6cf52" strokeWidth="4" strokeDasharray="1 1" />
      <path d="M6 37v15" stroke="#55c9a8" strokeWidth="4" strokeDasharray="1 1" />
    </svg>
  </div>
);

// --- Status bar and taskbar ---
const statusBtn = "flex h-[25px] shrink-0 items-center justify-center border border-[#a2a4a7] bg-[#cfcfd1]";

const StatusBar = () => (
  <footer className="flex h-[31px] shrink-0 items-center bg-[#dededf] pl-0.5 whitespace-nowrap text-[#222]">
    <span className="w-[203px] shrink-0">X = 74794 Y = 34952</span>
    <span className="w-[83px] shrink-0">层高： 5</span>
    <span className="w-[133px] shrink-0">标高: -5.6~-0.6</span>
    <span className="w-[103px] shrink-0">0</span>
    <span className="w-20 shrink-0">隐藏： 0</span>
    <div className="flex gap-[3px]">
      <button aria-label="正交" className={`${statusBtn} w-[25px]`}>
        <svg viewBox="0 0 16 16" fill="none" stroke="#444" className="h-4 w-4">
          <path d="M3.500 2v11.500H15M3.500 9.500h4v4" />
        </svg>
      </button>
      <button aria-label="捕捉" className="flex h-[25px] w-9 items-center justify-center border border-[#3b97f0] bg-white">
        <svg viewBox="0 0 16 16" fill="none" className="h-4 w-4">
          <path d="M3.500 2.500h11v12h-11z" stroke={B} />
          <path d="M1.500 .5h4v4h-4z" fill="#fdd9bd" stroke={O} />
        </svg>
        <span className="ml-1">
          <Caret />
        </span>
      </button>
      <button aria-label="交点" className={`${statusBtn} w-[25px]`}>
        <svg viewBox="0 0 18 18" fill="none" stroke="#888" className="h-[18px] w-[18px]">
          <path d="M1 1l16 16M17 1L1 17" />
        </svg>
      </button>
      <button aria-label="角度" className={`${statusBtn} w-9`}>
        <svg viewBox="0 0 16 16" fill="none" stroke="#444" className="h-4 w-4">
          <path d="M14 2L2.500 13.500H15M6 7l3 3" />
        </svg>
        <span className="ml-1">
          <Caret />
        </span>
      </button>
      <button aria-label="偏移" className={`${statusBtn} w-9`}>
        <svg viewBox="0 0 16 16" fill="none" stroke="#444" className="h-4 w-4">
          <path d="M4 1v8M0 5h8" />
          <path d="M7 10h8v4H7z" fill="#444" />
        </svg>
        <span className="ml-1">
          <Caret />
        </span>
      </button>
      <button className={`${statusBtn} w-[73px]`}>跨图层选择</button>
      <button className={`${statusBtn} w-[61px]`}>折线选择</button>
    </div>
    <span className="ml-[3px]">按鼠标左键指定第一个角点，或拾取构件图元</span>
    <span className="ml-auto pr-3">5.98802 FPS</span>
  </footer>
);

const taskItems = [
  { color: "#2f87dd", open: true },
  { color: "#4a9af5", open: false },
  { color: "#2a5d9c", open: true },
  { color: "#f6a623", open: false },
  { color: "#7fd0ea", open: false },
  { color: "#f39a2b", open: true },
  { color: "#0bbf4b", open: true },
  { color: "#2fc06b", open: true },
  { color: "#c3d3e2", open: true },
  { color: "#6fb0f5", open: true },
];

const Taskbar = () => (
  <div className="flex h-[7px] shrink-0 overflow-hidden border-t border-[#4f5f70] bg-linear-to-b from-[#93abc4] to-[#6f8cab]">
    <div className="flex w-[305px] shrink-0 items-start gap-12 pl-3">
      <span className="h-7 w-7 rounded-full border-2 border-[#d5e2ee] bg-[#3d6d9f]" />
      <span className="h-7 w-7 rounded-full border-t-3 border-[#f5c23c] bg-[#2c9be0]" />
      <span className="h-7 w-5 rounded-t-xl border-t-3 border-[#e0a63c]" />
    </div>
    {taskItems.map((item) => (
      <span
        key={item.color}
        className={`mr-1 flex h-7 w-[57px] shrink-0 justify-center rounded-t-sm pt-[3px] ${item.open ? "border border-[#3f5870] bg-[#c6d5e4]" : ""}`}
      >
        <span className="h-6 w-7 rounded-t-md" style={{ backgroundColor: item.color }} />
      </span>
    ))}
    <span className="mt-[3px] mr-14 ml-auto text-[11px] leading-3 text-white">15:22</span>
  </div>
);

const App = () => (
  <div className="relative flex h-screen flex-col overflow-hidden bg-white font-['Noto_Sans','Noto_Sans_CJK_SC',sans-serif] text-xs text-black">
    <Ribbon />
    <OptionBar />
    <main className="flex min-h-0 flex-1">
      <ComponentTree />
      <div className="w-1 shrink-0 bg-white" />
      <DrawingManager />
      <div className="flex w-1 shrink-0 items-center bg-white">
        <button aria-label="收起" className="flex h-[100px] w-1 items-center bg-[#5c6672]">
          <svg viewBox="0 0 4 6" className="h-1.5 w-1">
            <path d="M4 0v6L0 3z" fill="#c5c8cd" />
          </svg>
        </button>
      </div>
      <div className="relative min-w-0 flex-1 bg-black">
        <CadDrawing />
        <ViewToolbar />
      </div>
    </main>
    <StatusBar />
    <Taskbar />

    {/* pointer from the sheet list to the recognise button */}
    <svg viewBox="0 0 480 200" className="pointer-events-none absolute top-5 left-[430px] h-[200px] w-[480px]" aria-hidden="true">
      <path d="M5 194L450 10L448 5L473 7L456 25L454 20L220 115L5 195z" fill="#fb3a38" />
    </svg>
  </div>
);

export default App;
